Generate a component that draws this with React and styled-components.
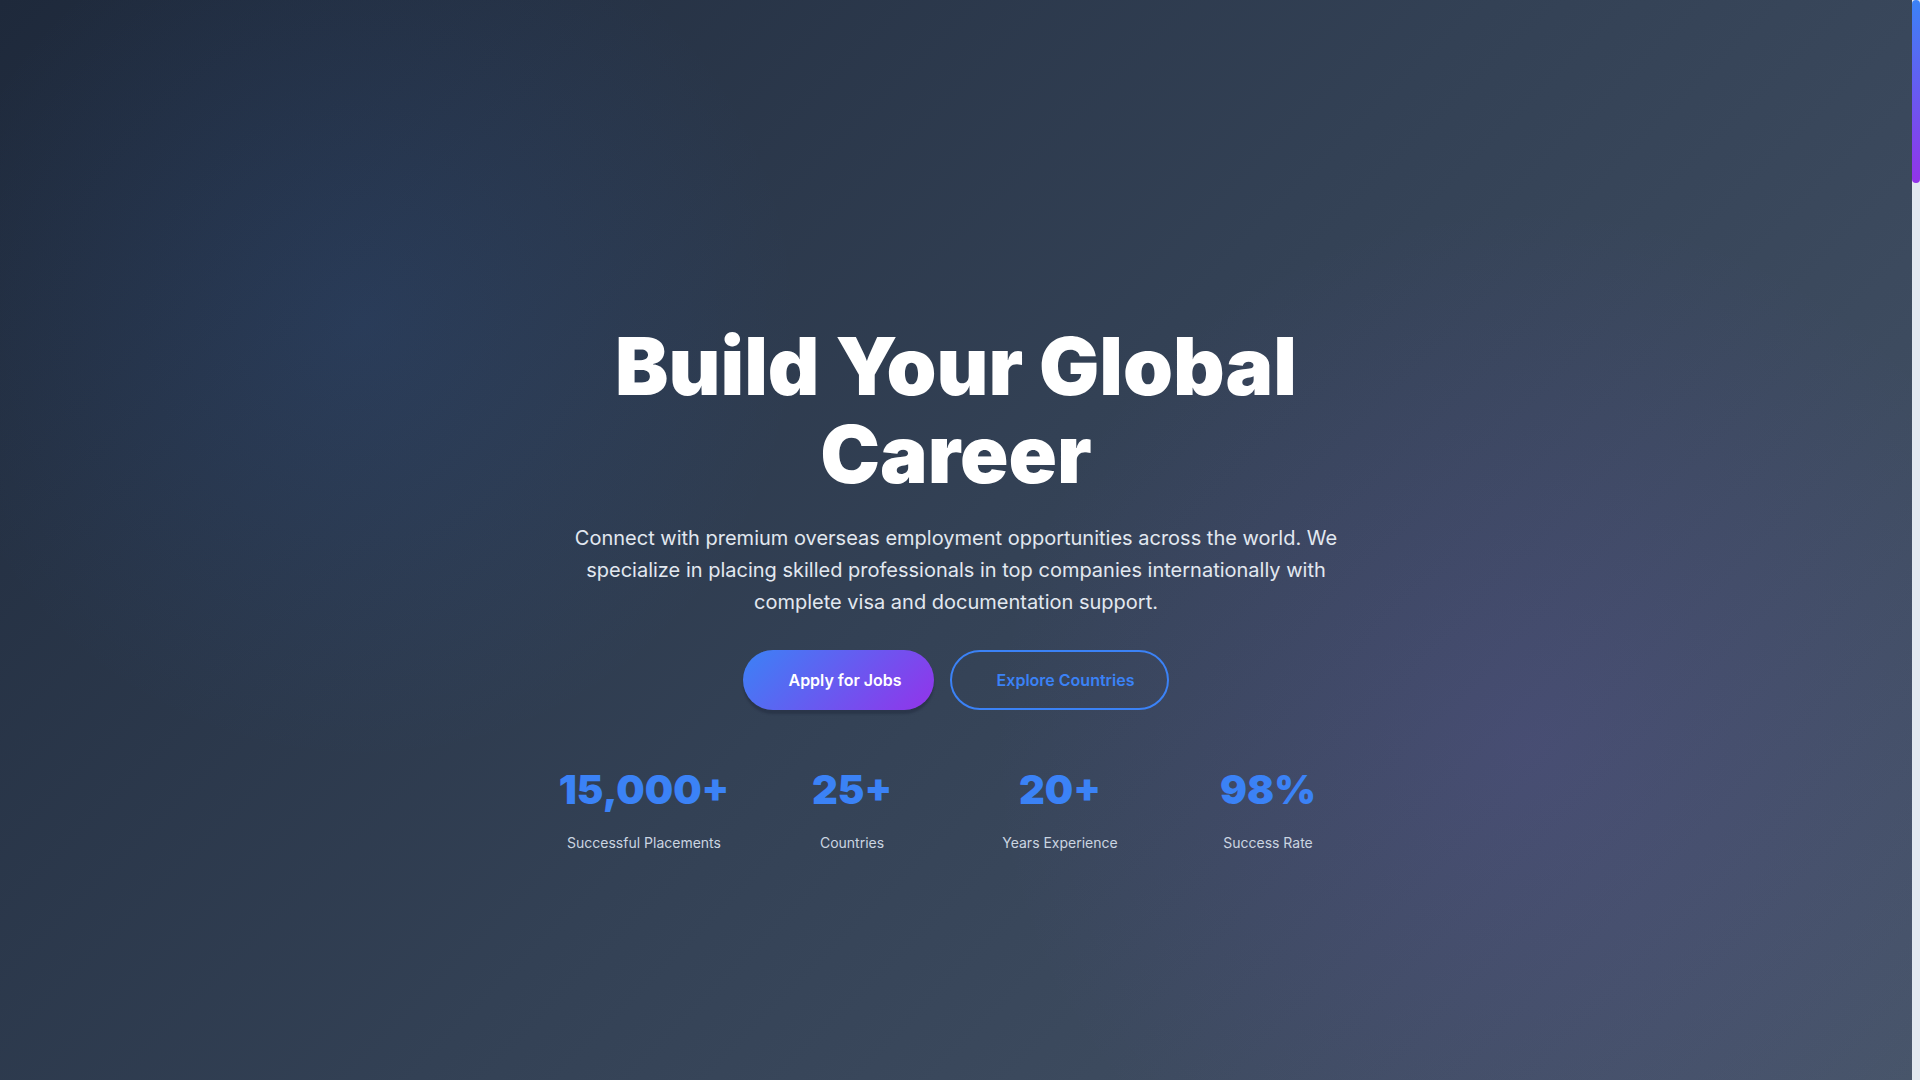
import React from "react";
import styled, { createGlobalStyle } from "styled-components";

const GlobalStyle = createGlobalStyle`
    * { box-sizing: border-box; }
    html, body {
        margin: 0;
        padding: 0;
        height: 100%;
        overflow: hidden;
        font-family: Inter, "Noto Sans", sans-serif;
        background: #1e293b;
    }
    #root { height: 100%; }
`;

const Page = styled.div`
    height: 100vh;
    overflow: hidden;
    padding-right: 8px;
    background: #e2e8f0;
`;

/* the page scrollbar as it looks in the original (blue → purple thumb) */
const ScrollRail = styled.div`
    position: fixed;
    top: 0;
    right: 0;
    width: 8px;
    height: 100vh;
    background: #e2e8f0;
`;

const ScrollThumb = styled.div`
    width: 8px;
    height: 183px;
    border-radius: 4px;
    background: linear-gradient(180deg, #3b82f6, #9333ea);
`;

const Hero = styled.section`
    min-height: 100vh;
    display: flex;
    align-items: center;
    justify-content: center;
    padding: 92px 24px 0;
    background:
        radial-gradient(circle 440px at 19% 30%, rgba(59, 130, 246, 0.1), transparent 100%),
        radial-gradient(circle 540px at 80% 69%, rgba(139, 92, 246, 0.13), transparent 100%),
        linear-gradient(135deg, #1e293b 0%, #334155 50%, #475569 100%);
`;

const Content = styled.div`
    max-width: 800px;
    width: 100%;
    display: flex;
    flex-direction: column;
    align-items: center;
    text-align: center;
`;

const Title = styled.h1`
    margin: 0 0 24px;
    font-size: 80px;
    font-weight: 900;
    line-height: 1.1;
    color: #ffffff;
`;

const Lead = styled.p`
    margin: 0 0 32px;
    font-size: 20px;
    line-height: 1.6;
    color: #e2e8f0;
`;

const Actions = styled.div`
    display: flex;
    gap: 16px;
    justify-content: center;
`;

const Button = styled.a`
    display: inline-flex;
    align-items: center;
    padding: ${(p) => (p.$outline ? "18px 32px 18px 45px" : "20px 32px 20px 45px")};
    border-radius: 50px;
    font-size: 16px;
    font-weight: 600;
    line-height: 20px;
    text-decoration: none;
    cursor: pointer;
    border: ${(p) => (p.$outline ? "2px solid #3b82f6" : "none")};
    color: ${(p) => (p.$outline ? "#3b82f6" : "#ffffff")};
    background: ${(p) =>
        p.$outline ? "transparent" : "linear-gradient(135deg, #3b82f6, #9333ea)"};
    box-shadow: ${(p) => (p.$outline ? "none" : "0 4px 2px rgba(30, 41, 59, 0.45)")};
`;

const Stats = styled.div`
    display: grid;
    grid-template-columns: repeat(4, 1fr);
    gap: 32px;
    width: 100%;
    margin-top: 56px;
`;

const Stat = styled.div`
    display: flex;
    flex-direction: column;
    align-items: center;
`;

const StatNumber = styled.div`
    font-size: 40px;
    font-weight: 900;
    line-height: 48px;
    color: #3b82f6;
    margin-bottom: 20px;
`;

const StatLabel = styled.div`
    font-size: 14px;
    color: #cbd5e1;
`;

const stats = [
    { value: "15,000+", label: "Successful Placements" },
    { value: "25+", label: "Countries" },
    { value: "20+", label: "Years Experience" },
    { value: "98%", label: "Success Rate" },
];

export default function App() {
    return (
        <Page>
            <GlobalStyle />
            <Hero>
                <Content>
                    <Title>Build Your Global Career</Title>
                    <Lead>
                        Connect with premium overseas employment opportunities across the
                        world. We specialize in placing skilled professionals in top
                        companies internationally with complete visa and documentation
                        support.
                    </Lead>
                    <Actions>
                        <Button href="#">Apply for Jobs</Button>
                        <Button href="#" $outline>
                            Explore Countries
                        </Button>
                    </Actions>
                    <Stats>
                        {stats.map((s) => (
                            <Stat key={s.label}>
                                <StatNumber>{s.value}</StatNumber>
                                <StatLabel>{s.label}</StatLabel>
                            </Stat>
                        ))}
                    </Stats>
                </Content>
            </Hero>
            <ScrollRail>
                <ScrollThumb />
            </ScrollRail>
        </Page>
    );
}
